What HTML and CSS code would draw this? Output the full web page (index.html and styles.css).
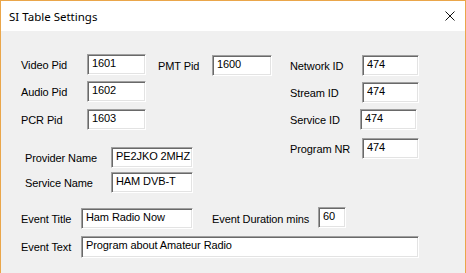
FILE: index.html
```html
<!DOCTYPE html>
<html lang="en">
<head>
    <meta charset="UTF-8">
    <title>SI Table Settings</title>
    <link rel="stylesheet" href="styles.css">
</head>
<body>
    <div class="window">
        <div class="titlebar">
            <span class="title">SI Table Settings</span>
            <svg class="close" width="10" height="10" viewBox="0 0 10 10">
                <path d="M0.5 0.5 L9.5 9.5 M9.5 0.5 L0.5 9.5" stroke="#111" stroke-width="1" fill="none"/>
            </svg>
        </div>

        <div class="client">
            <div class="top">
                <div class="left-area">
                    <div class="pid-block">
                        <div class="pids">
                            <div class="row"><label class="lbl-pid">Video Pid</label><input class="edit w-pid" value="1601"></div>
                            <div class="row"><label class="lbl-pid">Audio Pid</label><input class="edit w-pid" value="1602"></div>
                            <div class="row"><label class="lbl-pid">PCR Pid</label><input class="edit w-pid" value="1603"></div>
                        </div>
                        <div class="pmt">
                            <div class="row"><label class="lbl-pmt">PMT Pid</label><input class="edit w-pmt" value="1600"></div>
                        </div>
                    </div>
                    <div class="names">
                        <div class="row"><label class="lbl-name">Provider Name</label><input class="edit w-name" value="PE2JKO 2MHZ"></div>
                        <div class="row"><label class="lbl-name">Service Name</label><input class="edit w-name" value="HAM DVB-T"></div>
                    </div>
                </div>

                <div class="ids">
                    <div class="row"><label class="lbl-id">Network ID</label><input class="edit w-id" value="474"></div>
                    <div class="row"><label class="lbl-id">Stream ID</label><input class="edit w-id" value="474"></div>
                    <div class="row shift-left"><label class="lbl-id">Service ID</label><input class="edit w-id" value="474"></div>
                    <div class="row extra-gap"><label class="lbl-id">Program NR</label><input class="edit w-id" value="474"></div>
                </div>
            </div>

            <div class="events">
                <div class="row">
                    <label class="lbl-event">Event Title</label><input class="edit w-title" value="Ham Radio Now">
                    <label class="lbl-duration">Event Duration mins</label><input class="edit w-duration" value="60">
                </div>
                <div class="row">
                    <label class="lbl-event">Event Text</label><input class="edit w-text" value="Program about Amateur Radio">
                </div>
            </div>
        </div>
    </div>
</body>
</html>
```

FILE: styles.css
```css
html, body {
    margin: 0;
    padding: 0;
}
body {
    background-color: #f0f0f0;
    font-family: "Liberation Sans", Arial, sans-serif;
    font-size: 11px;
    color: #000;
}
.window {
    width: 464px;
    height: 272px;
    border: 1px solid #eaa64a;
    border-bottom: none;
    background-color: #f0f0f0;
    overflow: hidden;
}
.titlebar {
    height: 30px;
    background-color: #fff;
    display: flex;
    align-items: center;
    justify-content: space-between;
    padding: 0 10px 0 8px;
}
.title {
    font-family: "Noto Sans", "Open Sans", sans-serif;
    font-size: 11.5px;
    margin-top: 1px;
}
.client {
    padding: 23px 0 0 20px;
}
.row {
    display: flex;
    align-items: center;
    height: 21px;
}
label {
    display: block;
    white-space: nowrap;
    letter-spacing: -0.1px;
}
.edit {
    box-sizing: border-box;
    height: 21px;
    margin: 0;
    padding: 0 0 3px 4px;
    border: 1px solid;
    border-color: #a0a0a0 #fff #fff #a0a0a0;
    box-shadow: inset 1px 1px #696969, inset -1px -1px #e3e3e3;
    background-color: #fff;
    font-family: "Liberation Sans", Arial, sans-serif;
    font-size: 11px;
    letter-spacing: -0.1px;
    color: #000;
    outline: none;
}

/* top part */
.top {
    display: flex;
}
.left-area {
    display: flex;
    flex-direction: column;
}
.pid-block {
    display: flex;
}
.pids {
    display: flex;
    flex-direction: column;
    gap: 6px;
}
.pids .row:last-child {
    margin-top: 1px;
}
.lbl-pid { width: 66px; }
.w-pid { width: 59px; }

.pmt {
    margin-left: 12px;
    margin-top: 1px;
}
.lbl-pmt { width: 54px; }
.w-pmt { width: 60px; }

.names {
    display: flex;
    flex-direction: column;
    gap: 4px;
    margin-top: 17px;
    margin-left: 4px;
}
.lbl-name { width: 86px; }
.w-name { width: 82px; }

.ids {
    display: flex;
    flex-direction: column;
    gap: 6px;
    margin-left: 18px;
    margin-top: 1px;
}
.lbl-id { width: 72px; }
.w-id { width: 57px; }
.shift-left .w-id { margin-left: -2px; }
.extra-gap { margin-top: 2px; }

/* events */
.events {
    display: flex;
    flex-direction: column;
    gap: 7px;
    margin-top: 15px;
}
.lbl-event { width: 60px; }
.w-title { width: 112px; }
.lbl-duration {
    width: 106px;
    margin-left: 19px;
}
.w-duration {
    width: 28px;
    margin-top: -2px;
}
.w-text {
    width: 338px;
    height: 22px;
}
```
